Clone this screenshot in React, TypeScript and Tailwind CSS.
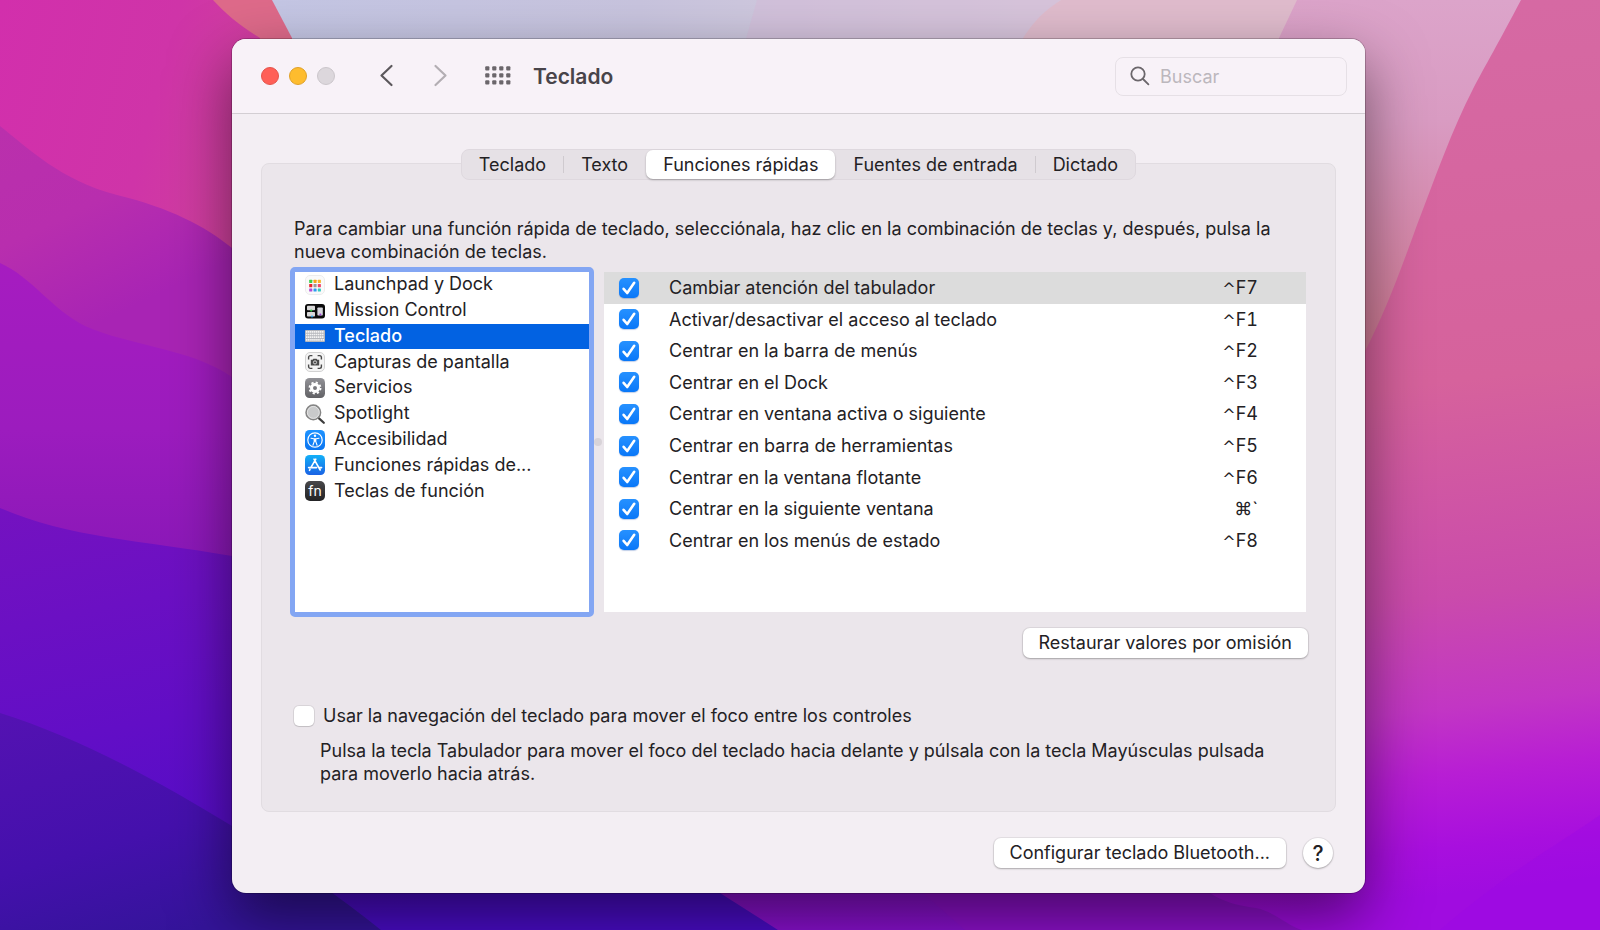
import * as React from "react";

interface Category {
  id: string;
  label: string;
  icon: React.ReactNode;
}

interface Shortcut {
  label: string;
  modifier: string;
  keyName: string;
}

const tabs = ["Teclado", "Texto", "Funciones rápidas", "Fuentes de entrada", "Dictado"];

const shortcuts: Shortcut[] = [
  { label: "Cambiar atención del tabulador", modifier: "^", keyName: "F7" },
  { label: "Activar/desactivar el acceso al teclado", modifier: "^", keyName: "F1" },
  { label: "Centrar en la barra de menús", modifier: "^", keyName: "F2" },
  { label: "Centrar en el Dock", modifier: "^", keyName: "F3" },
  { label: "Centrar en ventana activa o siguiente", modifier: "^", keyName: "F4" },
  { label: "Centrar en barra de herramientas", modifier: "^", keyName: "F5" },
  { label: "Centrar en la ventana flotante", modifier: "^", keyName: "F6" },
  { label: "Centrar en la siguiente ventana", modifier: "⌘", keyName: "`" },
  { label: "Centrar en los menús de estado", modifier: "^", keyName: "F8" },
];

const launchpadDots = [
  ["#3ecf4a", "#f7a21b", "#f6b62a"],
  ["#e8262d", "#9a9a9a", "#f0456b"],
  ["#b04bd8", "#2d9bf0", "#35c9c0"],
];

function LaunchpadIcon() {
  return (
    <svg viewBox="0 0 20 20" className="size-5">
      <rect x="0.5" y="0.5" width="19" height="19" rx="4.5" fill="#fafafa" stroke="#ececec" />
      {launchpadDots.map((row, y) =>
        row.map((color, x) => (
          <rect key={`${x}-${y}`} x={4.2 + x * 4.3} y={4.8 + y * 4.3} width="3.1" height="3.1" rx="0.5" fill={color} />
        )),
      )}
    </svg>
  );
}

function MissionControlIcon() {
  return (
    <svg viewBox="0 0 20 20" className="size-5">
      <rect x="0" y="3" width="20" height="14.5" rx="3" fill="#0b0b0b" />
      <rect x="2" y="4.8" width="8" height="4.4" rx="0.8" fill="#d9d9d9" />
      <rect x="2" y="11" width="8" height="4.6" rx="0.8" fill="#d9d9d9" />
      <rect x="12.4" y="6.5" width="5.4" height="8" rx="0.8" fill="#d5d5dc" />
      <circle cx="6.2" cy="9.6" r="1.1" fill="#35c84a" />
      <circle cx="7" cy="15.4" r="1" fill="#2da5ec" />
      <circle cx="15.4" cy="13.6" r="1" fill="#a23ddb" />
    </svg>
  );
}

function KeyboardIcon() {
  return (
    <svg viewBox="0 0 20 20" className="size-5">
      <rect x="0" y="4" width="20" height="12" rx="1" fill="#b4b6bb" />
      <path
        d="M1 5.9h18M1 13.9h3.6M15.6 13.9h3.4M5.2 13.9h9.6"
        stroke="#f4f4f4"
        strokeWidth="1.6"
        strokeDasharray="1.5 0.5"
      />
      <path d="M1 8.5h18M1 11.2h18" stroke="#f4f4f4" strokeWidth="1.7" strokeDasharray="1.5 0.5" />
    </svg>
  );
}

function ScreenshotIcon() {
  return (
    <svg viewBox="0 0 20 20" className="size-5" fill="none">
      <rect x="0.5" y="0.5" width="19" height="19" rx="4.5" fill="#f4f4f4" stroke="#d2d2d2" />
      <path
        d="M3.6 7.4V5.4c0-1 .8-1.8 1.8-1.8h2M12.6 3.6h2c1 0 1.8.8 1.8 1.8v2M16.4 12.6v2c0 1-.8 1.8-1.8 1.8h-2M7.4 16.4h-2c-1 0-1.8-.8-1.8-1.8v-2"
        stroke="#4a4a4a"
        strokeWidth="1.4"
      />
      <path d="M5.8 7.8h1.8l.8-1.1h3.2l.8 1.1h1.8v5.6H5.8z" fill="#4a4a4a" />
      <circle cx="10" cy="10.4" r="1.6" stroke="#f4f4f4" strokeWidth="0.8" />
    </svg>
  );
}

function ServicesIcon() {
  return (
    <svg viewBox="0 0 20 20" className="size-5" fill="none">
      <defs>
        <linearGradient id="services" x1="0" y1="0" x2="0" y2="1">
          <stop offset="0" stopColor="#929297" />
          <stop offset="1" stopColor="#626266" />
        </linearGradient>
      </defs>
      <rect width="20" height="20" rx="4.5" fill="url(#services)" />
      <circle cx="10" cy="10" r="3.5" stroke="#fff" strokeWidth="3" />
      <circle cx="10" cy="10" r="5.5" stroke="#fff" strokeWidth="1.9" strokeDasharray="2.16 2.16" />
    </svg>
  );
}

function SpotlightIcon() {
  return (
    <svg viewBox="0 0 20 20" className="size-5" fill="none">
      <path d="M14 14.4l4.8 4.4" stroke="#3d3d3d" strokeWidth="2.2" strokeLinecap="round" />
      <circle cx="8.3" cy="8.4" r="7.2" fill="#c9cacb" stroke="#858585" strokeWidth="1.7" />
      <circle cx="8.3" cy="8.4" r="6" stroke="#ececec" strokeWidth="0.8" />
    </svg>
  );
}

function AccessibilityIcon() {
  return (
    <svg viewBox="0 0 20 20" className="size-5" fill="none">
      <defs>
        <linearGradient id="accessibility" x1="0" y1="0" x2="0" y2="1">
          <stop offset="0" stopColor="#1e93ff" />
          <stop offset="1" stopColor="#0a74f0" />
        </linearGradient>
      </defs>
      <rect width="20" height="20" rx="4.5" fill="url(#accessibility)" />
      <circle cx="10" cy="10" r="7.2" stroke="#fff" strokeWidth="1.2" />
      <circle cx="10" cy="5.7" r="1.2" fill="#fff" />
      <path
        d="M6 8.2l2.8.6h2.4l2.8-.6M10 8.8v2.4M9.2 9v2.6l-1.3 3.6M10.8 9v2.6l1.3 3.6"
        stroke="#fff"
        strokeWidth="1.1"
        strokeLinecap="round"
        strokeLinejoin="round"
      />
    </svg>
  );
}

function AppStoreIcon() {
  return (
    <svg viewBox="0 0 20 20" className="size-5" fill="none">
      <defs>
        <linearGradient id="app-store" x1="0" y1="0" x2="0" y2="1">
          <stop offset="0" stopColor="#12b0f8" />
          <stop offset="1" stopColor="#1a62e4" />
        </linearGradient>
      </defs>
      <rect width="20" height="20" rx="4.5" fill="url(#app-store)" />
      <path
        d="M10.8 4.2L6 12.4M9 4.2l6.2 10.8M3.6 12.6h8M14.2 12.6h2.4M5 14.4l-.5.9"
        stroke="#fff"
        strokeWidth="1.6"
        strokeLinecap="round"
      />
    </svg>
  );
}

function FnIcon() {
  return (
    <span className="flex size-5 items-center justify-center rounded-[5px] bg-linear-to-b from-[#48484a] to-[#232325] text-sm leading-none text-white">
      fn
    </span>
  );
}

const categories: Category[] = [
  { id: "launchpad", label: "Launchpad y Dock", icon: <LaunchpadIcon /> },
  { id: "mission", label: "Mission Control", icon: <MissionControlIcon /> },
  { id: "keyboard", label: "Teclado", icon: <KeyboardIcon /> },
  { id: "screenshots", label: "Capturas de pantalla", icon: <ScreenshotIcon /> },
  { id: "services", label: "Servicios", icon: <ServicesIcon /> },
  { id: "spotlight", label: "Spotlight", icon: <SpotlightIcon /> },
  { id: "accessibility", label: "Accesibilidad", icon: <AccessibilityIcon /> },
  { id: "apps", label: "Funciones rápidas de...", icon: <AppStoreIcon /> },
  { id: "fn", label: "Teclas de función", icon: <FnIcon /> },
];

function Wallpaper() {
  return (
    <svg
      className="absolute inset-0 h-full w-full"
      viewBox="0 0 1600 930"
      preserveAspectRatio="none"
      aria-hidden="true"
    >
      <defs>
        <linearGradient id="sky" x1="0" y1="0" x2="1" y2="0">
          <stop offset="0.17" stopColor="#c4c6e4" />
          <stop offset="0.4" stopColor="#c8c4de" />
          <stop offset="0.65" stopColor="#dcd0de" />
        </linearGradient>
        <linearGradient id="lilac" x1="0" y1="0" x2="0" y2="1">
          <stop offset="0" stopColor="#dca4ca" />
          <stop offset="0.3" stopColor="#d99bc2" />
          <stop offset="0.55" stopColor="#d68bae" />
          <stop offset="0.85" stopColor="#d27c96" />
        </linearGradient>
        <linearGradient id="rose" x1="0" y1="0" x2="0.06" y2="1">
          <stop offset="0" stopColor="#d66aa4" />
          <stop offset="0.45" stopColor="#d6629c" />
          <stop offset="0.68" stopColor="#ca4bab" />
          <stop offset="0.8" stopColor="#c236c4" />
          <stop offset="0.87" stopColor="#b81ed4" />
          <stop offset="0.95" stopColor="#a80fde" />
          <stop offset="1" stopColor="#a00ce0" />
        </linearGradient>
        <linearGradient id="magenta" x1="0" y1="0" x2="1" y2="0.4">
          <stop offset="0" stopColor="#d22fac" />
          <stop offset="0.6" stopColor="#cf34a8" />
          <stop offset="1" stopColor="#d0429c" />
        </linearGradient>
        <linearGradient id="orchid" x1="0" y1="0" x2="0.3" y2="1">
          <stop offset="0" stopColor="#ba30ac" />
          <stop offset="0.3" stopColor="#b82eae" />
          <stop offset="0.6" stopColor="#a824b4" />
        </linearGradient>
        <linearGradient id="purple" x1="0" y1="0" x2="0" y2="1">
          <stop offset="0" stopColor="#a61cc0" />
          <stop offset="0.25" stopColor="#9c1cbe" />
          <stop offset="0.45" stopColor="#8a18b8" />
          <stop offset="1" stopColor="#8a10d0" />
        </linearGradient>
        <linearGradient id="violet" x1="0" y1="0" x2="0.4" y2="1">
          <stop offset="0" stopColor="#7412c0" />
          <stop offset="0.5" stopColor="#620ec6" />
          <stop offset="1" stopColor="#4a0cc8" />
        </linearGradient>
        <linearGradient id="indigo" x1="0" y1="0" x2="0.5" y2="1">
          <stop offset="0" stopColor="#5412b2" />
          <stop offset="0.6" stopColor="#4410ac" />
          <stop offset="1" stopColor="#34149a" />
        </linearGradient>
      </defs>
      <rect width="1600" height="930" fill="url(#sky)" />
      <path d="M757 0H1061C1035 20 1030 25 1023 60H740Z" fill="#d4bdd8" opacity="0.6" />
      <path d="M1061 0C1040 14 1034 22 1023 38V60H1300V0Z" fill="#e0bccd" />
      <path d="M1297 0L1279 38V400H1500L1560 0Z" fill="url(#lilac)" />
      <path d="M1521 0C1500 40 1484 68 1473 89C1452 130 1436 175 1417 225C1400 272 1384 315 1365 351L1100 930H1600V0Z" fill="url(#rose)" />
      <path d="M1600 815C1550 850 1510 870 1440 930H1600Z" fill="#9c08e4" opacity="0.35" />
      <path d="M0 0H272L292 38V400H0Z" fill="#de6a8a" />
      <path d="M0 0H213C226 14 240 26 260 38V400H0Z" fill="url(#magenta)" />
      <path d="M0 126C28 148 60 180 117 195C170 208 205 226 232 248V500H0Z" fill="url(#orchid)" />
      <path d="M0 263C33 278 50 308 85 326C130 346 190 348 232 377L920 800L1000 930H0Z" fill="url(#purple)" />
      <path d="M900 840L923 893L965 930H1302C1288 926 1275 912 1256 908C1225 904 1210 896 1195 880L1150 840Z" fill="#8e10cc" />
      <path d="M0 508C70 538 140 540 232 556C450 620 650 780 720 893L778 930H0Z" fill="url(#violet)" />
      <path d="M0 713C80 738 160 782 232 826C280 855 330 890 381 930H0Z" fill="url(#indigo)" />
    </svg>
  );
}

interface CheckboxProps {
  id: string;
  checked: boolean;
  onChange: () => void;
}

function Checkbox({ id, checked, onChange }: CheckboxProps) {
  return (
    <span className="relative block size-5">
      <input
        id={id}
        type="checkbox"
        checked={checked}
        onChange={onChange}
        className="block size-5 appearance-none rounded-[5px] bg-white shadow-[0_0_0_1px_rgba(0,0,0,0.08),0_1px_1px_rgba(0,0,0,0.1)] checked:bg-linear-to-b checked:from-[#2691ff] checked:to-[#0877f8] checked:shadow-[0_1px_1px_rgba(0,60,160,0.25)]"
      />
      {checked && (
        <svg viewBox="0 0 20 20" className="pointer-events-none absolute inset-0 size-5" fill="none">
          <path
            d="M4.6 10.8l3.6 4.2L15.2 4.8"
            stroke="#fff"
            strokeWidth="2.6"
            strokeLinecap="round"
            strokeLinejoin="round"
          />
        </svg>
      )}
    </span>
  );
}

const buttonStyle =
  "flex h-[30px] items-center rounded-[7px] bg-white px-4 pb-px shadow-[0_0_0_1px_rgba(0,0,0,0.06),0_1px_2px_rgba(0,0,0,0.25)]";

function TitleBar() {
  return (
    <header className="flex h-[75px] items-center border-b border-[#d3ced3] bg-[#f8f2f8] pr-[18px] pl-[29px]">
      <div className="flex gap-[10px]">
        <button aria-label="Cerrar" className="size-[18px] rounded-full border border-[#e5534b] bg-[#ff5f57]" />
        <button aria-label="Minimizar" className="size-[18px] rounded-full border border-[#e0a128] bg-[#febc2e]" />
        <button aria-label="Ampliar" disabled className="size-[18px] rounded-full border border-[#cbc6cb] bg-[#dcd7dc]" />
      </div>
      <button aria-label="Atrás" className="ml-[43px]">
        <svg viewBox="0 0 16 24" className="h-6 w-4" fill="none" stroke="#5c585c" strokeWidth="2.2" strokeLinecap="round" strokeLinejoin="round">
          <path d="M13.5 2L3.5 11.5l10 9.5" />
        </svg>
      </button>
      <button aria-label="Adelante" disabled className="ml-[38px]">
        <svg viewBox="0 0 16 24" className="h-6 w-4" fill="none" stroke="#b3aeb3" strokeWidth="2.2" strokeLinecap="round" strokeLinejoin="round">
          <path d="M3.5 2l10 9.5l-10 9.5" />
        </svg>
      </button>
      <button aria-label="Mostrar todo" className="ml-[37px]">
        <svg viewBox="0 0 26 20" className="h-5 w-[26px]" fill="#6b666b">
          {[0.2, 7.2, 14.2].map((y) =>
            [0.2, 7.2, 14.2, 21.2].map((x) => (
              <rect key={`${x}-${y}`} x={x} y={y} width="4.2" height="4.2" rx="1" />
            )),
          )}
        </svg>
      </button>
      <h1 className="ml-[22px] text-[21px] font-semibold text-[#48444a]">Teclado</h1>
      <label className="ml-auto flex h-[39px] w-[232px] items-center gap-[10px] rounded-lg border border-[#e6e0e6] px-[14px]">
        <svg viewBox="0 0 20 20" className="size-5 shrink-0" fill="none" stroke="#6b666b" strokeWidth="1.8" strokeLinecap="round">
          <circle cx="8" cy="8" r="6.7" />
          <path d="M13 13l5.4 5.4" />
        </svg>
        <input
          type="text"
          aria-label="Buscar"
          placeholder="Buscar"
          className="w-full min-w-0 bg-transparent outline-none placeholder:text-[#bcb7bd]"
        />
      </label>
    </header>
  );
}

export default function App() {
  const [activeTab, setActiveTab] = React.useState(2);
  const [category, setCategory] = React.useState("keyboard");
  const [enabled, setEnabled] = React.useState(shortcuts.map(() => true));
  const [navigation, setNavigation] = React.useState(false);

  const toggleShortcut = (index: number) =>
    setEnabled((prev) => prev.map((value, i) => (i === index ? !value : value)));

  return (
    <div className="relative min-h-screen overflow-hidden pt-[39px] pr-[235px] pb-[37px] pl-[232px] font-['Inter','Noto_Sans',sans-serif] text-lg leading-[23px] text-[#232124]">
      <Wallpaper />

      <main className="relative overflow-hidden rounded-[14px] bg-[#f3eef3] shadow-[0_0_0_1px_rgba(0,0,0,0.2),0_24px_60px_rgba(0,0,0,0.5)]">
        <TitleBar />

        <div className="px-[29px]">
          {/* Tabs */}
          <div className="relative mt-[35px] flex justify-center">
            <div role="tablist" className="flex h-[31px] items-center rounded-lg border border-[#ded8de] bg-[#e6e1e6]">
              {tabs.map((tab, idx) => (
                <React.Fragment key={tab}>
                  {idx > 0 && (
                    <span
                      className={`h-[17px] w-px ${idx === activeTab || idx - 1 === activeTab ? "bg-transparent" : "bg-[#cfcacf]"}`}
                    />
                  )}
                  <button
                    role="tab"
                    aria-selected={idx === activeTab}
                    onClick={() => setActiveTab(idx)}
                    className={`h-[29px] rounded-[7px] px-[17px] pb-px ${idx === activeTab ? "bg-white shadow-[0_1px_2px_rgba(0,0,0,0.3)]" : ""}`}
                  >
                    {tab}
                  </button>
                </React.Fragment>
              ))}
            </div>
          </div>

          <section className="-mt-[17px] rounded-lg border border-[#e1dce1] bg-[#ebe6eb] pt-[53px] pr-[27px] pb-[26px] pl-8">
            <p>
              Para cambiar una función rápida de teclado, selecciónala, haz clic en la combinación de teclas y, después, pulsa la nueva combinación de teclas.
            </p>

            <div className="mt-1 -ml-1 flex">
              {/* Categories */}
              <div className="h-[350px] w-[304px] shrink-0 rounded-[5px] border-[5px] border-[#83a6f3] bg-white">
                <ul className="grid h-[232px] auto-rows-fr">
                  {categories.map((item) => (
                    <li key={item.id}>
                      <button
                        onClick={() => setCategory(item.id)}
                        className={`flex h-full w-full items-center gap-[9px] pl-[10px] text-left whitespace-nowrap ${item.id === category ? "bg-[#0262e2] font-medium text-white" : ""}`}
                      >
                        {item.icon}
                        <span className="pb-0.5">{item.label}</span>
                      </button>
                    </li>
                  ))}
                </ul>
              </div>

              <div className="flex w-[10px] shrink-0 items-center">
                <span className="size-2 rounded-full bg-[#d8d3d8]" />
              </div>

              {/* Shortcuts */}
              <div className="my-[5px] mr-0.5 grow bg-white">
                <table className="h-[284px] w-full">
                  <tbody>
                    {shortcuts.map((item, idx) => (
                      <tr key={item.label} className={idx === 0 ? "bg-[#dcdcdc]" : ""}>
                        <td className="w-[65px] pl-[15px]">
                          <Checkbox
                            id={`shortcut-${idx}`}
                            checked={enabled[idx]}
                            onChange={() => toggleShortcut(idx)}
                          />
                        </td>
                        <td>
                          <label htmlFor={`shortcut-${idx}`}>{item.label}</label>
                        </td>
                        <td className="pr-12 text-right tabular-nums">
                          {item.modifier === "^" ? (
                            <span className="font-['DejaVu_Sans',sans-serif] text-base leading-none">^</span>
                          ) : (
                            item.modifier
                          )}
                          {item.keyName}
                        </td>
                      </tr>
                    ))}
                  </tbody>
                </table>
              </div>
            </div>

            <div className="mt-[11px] flex justify-end">
              <button className={buttonStyle}>Restaurar valores por omisión</button>
            </div>

            <div className="mt-[46px] flex items-center gap-[9px]">
              <Checkbox id="navigation" checked={navigation} onChange={() => setNavigation(!navigation)} />
              <label htmlFor="navigation">
                Usar la navegación del teclado para mover el foco entre los controles
              </label>
            </div>
            <p className="mt-3 pr-6 pl-[26px]">
              Pulsa la tecla Tabulador para mover el foco del teclado hacia delante y púlsala con la tecla Mayúsculas pulsada para moverlo hacia atrás.
            </p>
          </section>

          <footer className="mt-[26px] flex justify-end gap-[17px] pr-[3px] pb-[25px]">
            <button className={buttonStyle}>Configurar teclado Bluetooth...</button>
            <button
              aria-label="Ayuda"
              className="size-[30px] rounded-full bg-white text-[21px] font-medium shadow-[0_0_0_1px_rgba(0,0,0,0.06),0_1px_2px_rgba(0,0,0,0.25)]"
            >
              ?
            </button>
          </footer>
        </div>
      </main>
    </div>
  );
}
